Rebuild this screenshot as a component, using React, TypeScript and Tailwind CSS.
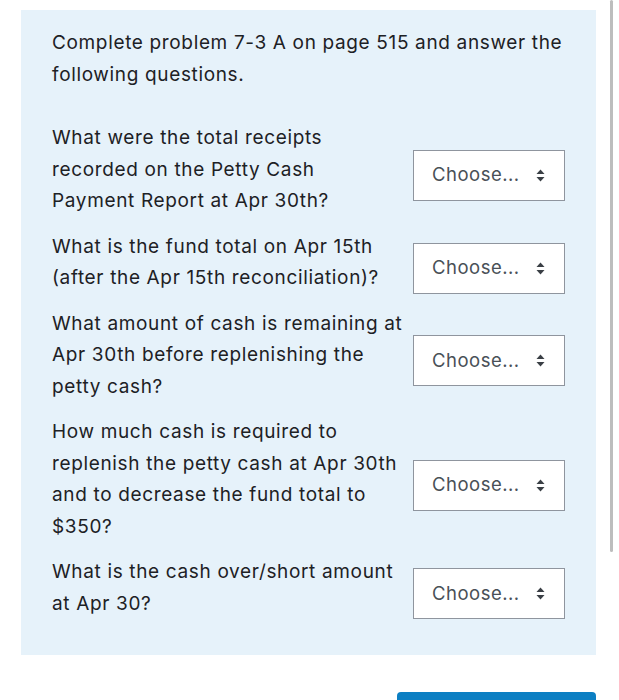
const questions = [
  "What were the total receipts recorded on the Petty Cash Payment Report at Apr 30th?",
  "What is the fund total on Apr 15th (after the Apr 15th reconciliation)?",
  "What amount of cash is remaining at Apr 30th before replenishing the petty cash?",
  "How much cash is required to replenish the petty cash at Apr 30th and to decrease the fund total to $350?",
  "What is the cash over/short amount at Apr 30?",
];

function UpDown() {
  return (
    <svg width="9" height="13" viewBox="0 0 9 13" className="text-[#3a3f45]">
      <path d="M4.5 0.5 L8.5 5 H0.5 Z" fill="currentColor" />
      <path d="M4.5 12.5 L8.5 8 H0.5 Z" fill="currentColor" />
    </svg>
  );
}

function ChooseSelect() {
  return (
    <div className="mt-3 flex h-[51px] w-[152px] flex-shrink-0 items-center gap-[16px] border border-[#8f959e] bg-white pl-[18px]">
      <span className="text-[18.5px] tracking-[0.5px] text-[#495057]">Choose...</span>
      <UpDown />
    </div>
  );
}

export default function App() {
  return (
    <div
      className="relative h-[740px] bg-white pt-[10px] text-[#1d2125]"
      style={{ fontFamily: "Inter, 'Noto Sans', sans-serif" }}
    >
      <div className="ml-[21px] w-[575px] bg-[#e6f2fa] px-[31px] pb-[36px] pt-[17px]">
        <p className="text-[19px] leading-[31.5px] tracking-[0.65px]">
          Complete problem 7-3 A on page 515 and answer the following questions.
        </p>
        <div className="mt-[32px] flex flex-col gap-[14px]">
          {questions.map((q) => (
            <div key={q} className="flex items-center">
              <p className="w-[350.5px] text-[19px] leading-[31.5px] tracking-[0.65px]">{q}</p>
              <div className="ml-auto">
                <ChooseSelect />
              </div>
            </div>
          ))}
        </div>
      </div>
      <div className="ml-[397px] mt-[37px] h-10 w-[199px] rounded-sm bg-[#0c7fc3]" />
      <div className="absolute right-[6px] top-0 h-[552px] w-[3px] rounded-full bg-[#bdbdbd]" />
    </div>
  );
}
